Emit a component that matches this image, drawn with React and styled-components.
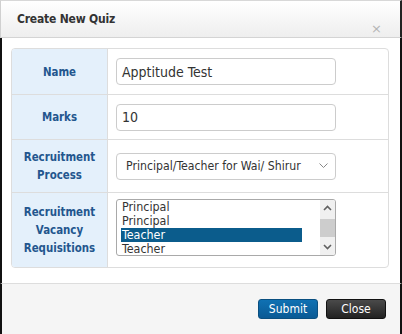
import React from 'react'
import styled, { createGlobalStyle } from 'styled-components'

const GlobalStyle = createGlobalStyle`
  html, body {
    margin: 0;
    padding: 0;
    background: #fff;
  }
  body {
    font-family: "DejaVu Sans Condensed", "DejaVu Sans", sans-serif;
  }
`

const Modal = styled.div`
  width: 402px;
  height: 334px;
  box-sizing: border-box;
  display: flex;
  flex-direction: column;
  background: #fff;
`

const Header = styled.div`
  height: 38px;
  box-sizing: border-box;
  display: flex;
  align-items: flex-start;
  justify-content: space-between;
  padding: 11px 18px 0 16px;
  background: linear-gradient(#ffffff, #eeeeee);
  border-top: 1px solid #d8d8d8;
  border-left: 1px solid #d0d0d0;
  border-right: 2px solid #222;
  border-bottom: 1px solid #d4d4d4;
`

const Title = styled.h3`
  margin: 0;
  font-size: 12px;
  font-weight: bold;
  letter-spacing: -0.2px;
  color: #333;
`

const CloseX = styled.span`
  margin-top: 10px;
  font-size: 13px;
  line-height: 13px;
  color: #b5b5b5;
  font-family: "DejaVu Sans", sans-serif;
`

const Body = styled.div`
  flex: 1;
  padding: 10px 11px 0 9px;
  border-left: 2px solid #111;
  border-right: 2px solid #111;
`

const Table = styled.div`
  display: grid;
  grid-template-columns: 96px 1fr;
  grid-template-rows: 45px 45px 53px 75px;
  border: 1px solid #dddddd;
  border-radius: 4px;
  overflow: hidden;
`

const Label = styled.div`
  display: flex;
  align-items: center;
  justify-content: center;
  text-align: center;
  background: #e4f0fb;
  color: #23568e;
  font-weight: bold;
  font-size: 11.4px;
  line-height: 18px;
  border-right: 1px solid #dddddd;
  border-top: ${p => (p.$first ? 'none' : '1px solid #dddddd')};
`

const Cell = styled.div`
  display: flex;
  align-items: center;
  padding-left: 8px;
  border-top: ${p => (p.$first ? 'none' : '1px solid #dddddd')};
`

const Input = styled.div`
  width: 220px;
  height: 27px;
  box-sizing: border-box;
  border: 1px solid #cccccc;
  border-radius: 4px;
  display: flex;
  align-items: center;
  padding-left: 5px;
  font-size: 14px;
  color: #333;
`

const Select = styled(Input)`
  justify-content: space-between;
  padding: 0 7px 0 9px;
  font-size: 12.2px;
`

const ListBox = styled.div`
  width: 220px;
  height: 57px;
  box-sizing: border-box;
  border: 1px solid #a9a9a9;
  border-radius: 3px;
  display: flex;
  overflow: hidden;
  margin-top: -5px;
`

const Options = styled.div`
  flex: 1;
  padding: 0 0 0 4px;
  overflow: hidden;
`

const Option = styled.div`
  width: 180px;
  height: 14px;
  line-height: 14px;
  font-size: 12.4px;
  padding-left: 1px;
  color: ${p => (p.$selected ? '#fff' : '#333')};
  background: ${p => (p.$selected ? '#0b5c8c' : 'transparent')};
`

const Scrollbar = styled.div`
  width: 15px;
  background: #f0f0f0;
  display: flex;
  flex-direction: column;
  align-items: center;
`

const Arrow = styled.div`
  height: 16px;
  display: flex;
  align-items: center;
  justify-content: center;
`

const Track = styled.div`
  flex: 1;
  width: 100%;
  display: flex;
  flex-direction: column;
  justify-content: center;
`

const Thumb = styled.div`
  height: 18px;
  background: #cdcdcd;
`

const Footer = styled.div`
  height: 51px;
  box-sizing: border-box;
  display: flex;
  justify-content: flex-end;
  align-items: flex-start;
  gap: 8px;
  padding: 15px 14px 0 0;
  background: #f5f5f5;
  border-top: 1px solid #dddddd;
  border-left: 2px solid #111;
  border-right: 2px solid #111;
`

const Button = styled.button`
  width: 60px;
  height: 20px;
  padding: 0;
  border-radius: 3px;
  font-family: "DejaVu Sans Condensed", "DejaVu Sans", sans-serif;
  font-size: 12px;
  color: #fff;
  cursor: pointer;
  border: 1px solid ${p => (p.$dark ? '#111' : '#0a4f80')};
  background: ${p =>
    p.$dark
      ? 'linear-gradient(#4a4a4a, #222222)'
      : 'linear-gradient(#0f71b3, #0a5a95)'};
`

const Chevron = ({ up }) => (
  <svg width="9" height="6" viewBox="0 0 9 6">
    <path
      d={up ? 'M1 5 L4.5 1.5 L8 5' : 'M1 1 L4.5 4.5 L8 1'}
      fill="none"
      stroke="#606060"
      strokeWidth="1.6"
    />
  </svg>
)

export default function App() {
  return (
    <>
      <GlobalStyle />
      <Modal>
        <Header>
          <Title>Create New Quiz</Title>
          <CloseX>×</CloseX>
        </Header>
        <Body>
          <Table>
            <Label $first>Name</Label>
            <Cell $first>
              <Input>Apptitude Test</Input>
            </Cell>

            <Label>Marks</Label>
            <Cell>
              <Input>10</Input>
            </Cell>

            <Label>Recruitment<br />Process</Label>
            <Cell>
              <Select>
                <span>Principal/Teacher for Wai/ Shirur</span>
                <svg width="9" height="6" viewBox="0 0 9 6">
                  <path d="M0.5 0.5 L4.5 4.5 L8.5 0.5" fill="none" stroke="#888" strokeWidth="1" />
                </svg>
              </Select>
            </Cell>

            <Label>Recruitment<br />Vacancy<br />Requisitions</Label>
            <Cell>
              <ListBox>
                <Options>
                  <Option>Principal</Option>
                  <Option>Principal</Option>
                  <Option $selected>Teacher</Option>
                  <Option>Teacher</Option>
                </Options>
                <Scrollbar>
                  <Arrow><Chevron up /></Arrow>
                  <Track><Thumb /></Track>
                  <Arrow><Chevron /></Arrow>
                </Scrollbar>
              </ListBox>
            </Cell>
          </Table>
        </Body>
        <Footer>
          <Button>Submit</Button>
          <Button $dark>Close</Button>
        </Footer>
      </Modal>
    </>
  )
}
